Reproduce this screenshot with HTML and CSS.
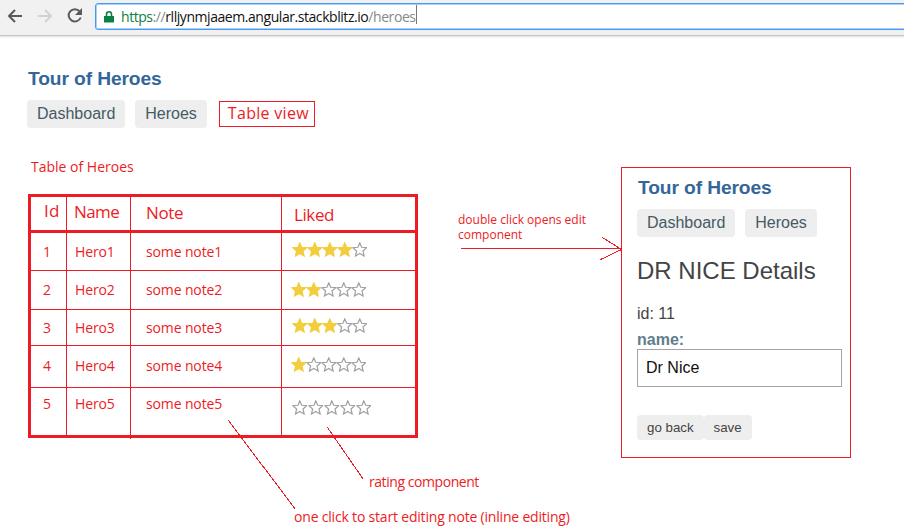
FILE: index.html
```html
<!DOCTYPE html>
<html lang="en">
<head>
<meta charset="utf-8">
<title>Tour of Heroes</title>
<link rel="stylesheet" href="styles.css">
</head>
<body>
<svg class="defs" width="0" height="0">
  <symbol id="star" viewBox="0 0 15 15"><path d="M7.8 .9 9.700 5.3 14.700 5.7 11 9 12.100 14 7.8 11.5 3.5 14 4.600 9 .9 5.7 5.900 5.3Z"/></symbol>
</svg>
<header class="toolbar">
  <svg class="nav-icons" viewBox="0 0 90 34" width="90" height="34">
    <path class="back" d="M22 16H9M15 10 9 16 15 22"/>
    <path class="forward" d="M38 16H51M45 10 51 16 45 22"/>
    <path class="reload" d="M79.6 11.3A6.2 6.2 0 1 0 80.7 17.5"/>
    <path class="reload-tip" d="M82 8V15H75Z"/>
  </svg>
  <div class="address">
    <svg class="lock" viewBox="0 0 10 12" width="10" height="12"><path class="shackle" d="M2.5 6V3.3a2.5 2.5 0 0 1 5 0V6"/><path class="lock-body" d="M0 5H10V11.5H0Z"/></svg>
    <span class="url"><span class="scheme">https</span><span class="muted">://</span>rlljynmjaaem.angular.stackblitz.io<span class="muted">/heroes</span></span><i class="caret"></i>
  </div>
</header>
<main class="page">
  <section class="list-view">
    <h1>Tour of Heroes</h1>
    <nav><a>Dashboard</a><a>Heroes</a><a class="table-link">Table view</a></nav>
    <h2 class="note-text caption">Table of Heroes</h2>
    <div class="table note-text">
      <div class="row head"><div class="c-id">Id</div><div class="c-name">Name</div><div class="c-note">Note</div><div class="c-liked">Liked</div></div>
      <div class="row r1"><div>1</div><div>Hero1</div><div class="n">some note1</div><div class="stars"><svg class="on"><use href="#star"/></svg><svg class="on"><use href="#star"/></svg><svg class="on"><use href="#star"/></svg><svg class="on"><use href="#star"/></svg><svg><use href="#star"/></svg></div></div>
      <div class="row r2"><div>2</div><div>Hero2</div><div class="n">some note2</div><div class="stars"><svg class="on"><use href="#star"/></svg><svg class="on"><use href="#star"/></svg><svg><use href="#star"/></svg><svg><use href="#star"/></svg><svg><use href="#star"/></svg></div></div>
      <div class="row r3"><div>3</div><div>Hero3</div><div class="n">some note3</div><div class="stars"><svg class="on"><use href="#star"/></svg><svg class="on"><use href="#star"/></svg><svg class="on"><use href="#star"/></svg><svg><use href="#star"/></svg><svg><use href="#star"/></svg></div></div>
      <div class="row r4"><div>4</div><div>Hero4</div><div class="n">some note4</div><div class="stars"><svg class="on"><use href="#star"/></svg><svg><use href="#star"/></svg><svg><use href="#star"/></svg><svg><use href="#star"/></svg><svg><use href="#star"/></svg></div></div>
      <div class="row r5"><div>5</div><div>Hero5</div><div class="n">some note5</div><div class="stars"><svg><use href="#star"/></svg><svg><use href="#star"/></svg><svg><use href="#star"/></svg><svg><use href="#star"/></svg><svg><use href="#star"/></svg></div></div>
    </div>
    <p class="note-text rating-label">rating component</p>
    <p class="note-text editing-label">one click to start editing note (inline editing)</p>
  </section>
  <p class="note-text open-label">double click opens edit<br>component</p>
  <section class="details">
    <h1>Tour of Heroes</h1>
    <nav><a>Dashboard</a><a>Heroes</a></nav>
    <h2>DR NICE Details</h2>
    <div class="id-line">id: 11</div>
    <label>name:</label>
    <div class="field">Dr Nice</div>
    <div class="actions"><button>go back</button><button>save</button></div>
  </section>
</main>
<svg class="arrows" viewBox="0 0 904 531" width="904" height="531">
  <path d="M228.5 420.500 295.500 509.500M327.500 427.500 363.500 479.500M461 248.500H621M602.500 237.500 621.500 249.500 600.500 259.500M130.500 437V439"/>
</svg>
</body>
</html>
```
FILE: styles.css
```css
* { box-sizing: border-box; }
body { margin: 0; width: 904px; height: 531px; overflow: hidden; position: relative; background: #fff; font-family: "Liberation Sans", Arial, sans-serif; }
h1, h2, p { margin: 0; font-weight: 400; }
.defs { position: absolute; }
.toolbar { display: flex; height: 36px; background: #f1f1f1; border-bottom: 1px solid #c4c4c4; box-shadow: 0 1px 2px #ddd; }
.nav-icons { flex: none; margin-right: 5px; fill: none; stroke: #5a5a5a; stroke-width: 2; }
.nav-icons .forward { stroke: #d2d2d2; }
.nav-icons .reload-tip { fill: #5a5a5a; stroke: none; }
.address { display: flex; align-items: center; width: 830px; height: 27px; margin-top: 3px; border: 1px solid #4a98f5; border-radius: 3px; background: #fff; box-shadow: inset 0 0 0 1px #a9cffb; padding-left: 8px; flex: none; }
.lock { margin-right: 7px; margin-top: 1px; }
.shackle { fill: none; stroke: #0b8043; stroke-width: 1.6; }
.lock-body { fill: #0b8043; }
.url { font: 14px/20px "Open Sans", sans-serif; letter-spacing: -.44px; color: #111; white-space: nowrap; }
.scheme { color: #0b8043; }
.muted { color: #888; }
.caret { width: 1px; height: 19px; margin-top: -4px; background: #777; }
.page { display: flex; align-items: flex-start; }
.list-view { width: 458px; padding: 31px 0 0 28px; flex: none; }
h1 { font-size: 19.2px; line-height: 23px; font-weight: 700; letter-spacing: -.1px; color: #369; }
nav { display: flex; gap: 10px; margin: 10px 0 0 -1px; }
nav a { height: 28px; padding: 0 10px; border-radius: 4px; background: #eee; color: #455a64; font-size: 16px; line-height: 27px; }
.note-text, .table-link { font-family: "Open Sans", sans-serif; color: #ed1c24; }
nav .table-link { width: 96px; height: 26px; margin: 1px 0 1px 2px; padding: 0 0 0 8px; border: 1px solid #ed1c24; border-radius: 0; background: #fff; color: #ed1c24; line-height: 23px; letter-spacing: .3px; white-space: nowrap; }
.caption { margin: 29px 0 0 3px; font-size: 14px; line-height: 20px; }
.table { width: 390px; height: 244px; margin-top: 18px; border: 3px solid #ed1c24; font-size: 14px; line-height: 20px; letter-spacing: -.13px; }
.list-view h1 { padding-top: 1px; line-height: 22px; }
.caption + .table { margin-top: 17px; }
.row { display: grid; grid-template-columns: 36px 64px 151px 133px; border-bottom: 1px solid #ed1c24; }
.row > div { border-right: 1px solid #ed1c24; padding: 9px 0 0 8px; white-space: nowrap; }
.row > div:first-child { padding-left: 12px; }
.row > .n { padding-left: 15px; }
.row > div:last-child { border-right: 0; }
.head { height: 36px; border-bottom-width: 3px; font-size: 17px; letter-spacing: -.4px; }
.row > .c-id, .row > .c-name { padding-top: 5px; padding-left: 7px; }
.row > .c-id:first-child { padding-left: 13px; padding-top: 4px; letter-spacing: .3px; }
.row > .c-name { letter-spacing: -.6px; }
.row > .c-note { padding: 6px 0 0 15px; }
.row > .c-liked { padding: 8px 0 0 12px; }
.r1 { height: 38px; }
.r2 { height: 39px; }
.r3 { height: 36px; }
.r4 { height: 42px; }
.r5 { height: 47px; border-bottom: 0; }
.r3 > div { padding-top: 8px; }
.r4 > div { padding-top: 10px; }
.r5 > div { padding-top: 6px; }
.row > .stars { display: flex; align-items: flex-start; padding-left: 10px; }
.stars svg { width: 15px; height: 15px; fill: #fff; stroke: #a0a0a0; stroke-width: 1.2; overflow: visible; }
.stars .on { fill: #f2cd3d; stroke: #f2cd3d; }
.r1 > .stars { padding-top: 9px; }
.r2 > .stars, .r4 > .stars { padding-left: 9px; padding-top: 11px; }
.r3 > .stars { padding-top: 8px; }
.r5 > .stars { padding-top: 12px; gap: 1px; }
.rating-label { margin: 34px 0 0 341px; font-size: 14px; line-height: 20px; letter-spacing: -.44px; white-space: nowrap; }
.editing-label { margin: 15px 0 0 266px; font-size: 14px; line-height: 20px; letter-spacing: -.19px; white-space: nowrap; }
.open-label { width: 163px; flex: none; margin-top: 176px; font-size: 12px; line-height: 15px; white-space: nowrap; }
.details { width: 230px; height: 291px; margin-top: 131px; padding: 8px 8px 0 16px; border: 1px solid #ed1c24; flex: none; }
.details h2 { margin-top: 19px; font-size: 24px; line-height: 30px; color: #444; margin-left: -1px; }
.id-line { margin: 18px 0 0 -1px; font-size: 16px; line-height: 20px; color: #444; }
label { display: block; margin: 6px 0 0 -1px; font-size: 16px; line-height: 20px; font-weight: 700; color: #607d8b; }
.field { width: 205px; height: 38px; margin-top: -1px; margin-left: -1px; padding-left: 8px; border: 1px solid #a5a5a5; font-size: 16px; line-height: 36px; color: #111; }
.actions { display: flex; margin: 28px 0 0 -1px; }
button { height: 25px; padding: 0 10px; border: 0; border-radius: 4px; background: #eee; font: 13.3px "Liberation Sans", Arial, sans-serif; color: #444; }
.arrows { position: absolute; left: 0; top: 0; pointer-events: none; fill: none; stroke: #ed1c24; stroke-width: 1; shape-rendering: crispEdges; }
```
